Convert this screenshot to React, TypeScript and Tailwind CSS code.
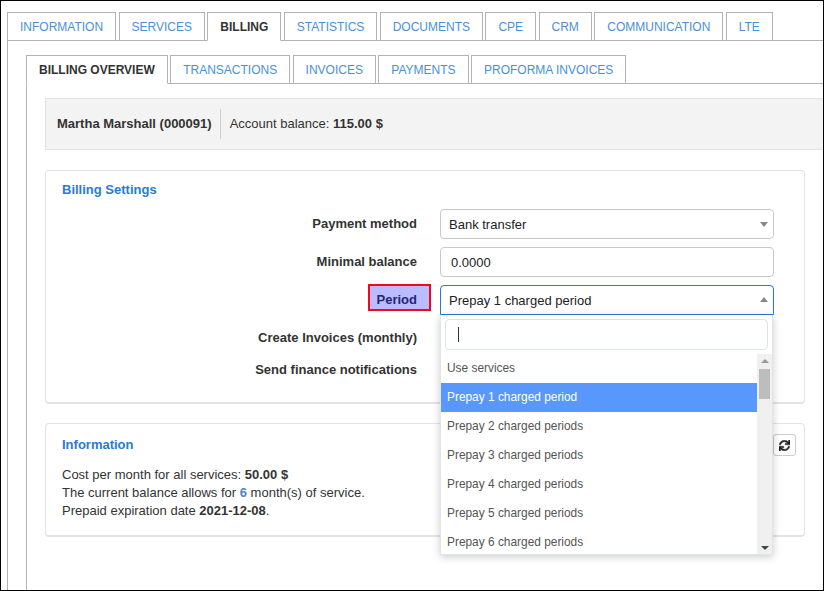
import React from 'react';
import { FaSync } from 'react-icons/fa';

const MAIN_TABS = ['INFORMATION', 'SERVICES', 'BILLING', 'STATISTICS', 'DOCUMENTS', 'CPE', 'CRM', 'COMMUNICATION', 'LTE'];
const SUB_TABS = ['BILLING OVERVIEW', 'TRANSACTIONS', 'INVOICES', 'PAYMENTS', 'PROFORMA INVOICES'];
const PERIODS = [
  'Use services',
  'Prepay 1 charged period',
  'Prepay 2 charged periods',
  'Prepay 3 charged periods',
  'Prepay 4 charged periods',
  'Prepay 5 charged periods',
  'Prepay 6 charged periods',
];

function Tabs({ items, active }: { items: string[]; active: string }) {
  return (
    <ul className="flex gap-[2.4px] border-b border-[#b3b3b3] h-[29px]">
      {items.map((tab) => (
        <li
          key={tab}
          className={`h-[29px] border border-[#b3b3b3] flex items-center text-[12px] px-[12px] ${
            tab === active ? 'border-b-white font-bold text-[#333]' : 'text-[#4a90d9]'
          }`}
        >
          {tab}
        </li>
      ))}
    </ul>
  );
}

function Label({ children }: { children: React.ReactNode }) {
  return <div className="text-right font-bold text-[#333]">{children}</div>;
}

function PeriodDropdown() {
  return (
    <div className="absolute left-0 top-[30px] z-10 w-[333px] h-[240px] bg-white shadow-[0_2px_8px_rgba(0,0,0,0.2)] border-x border-b border-[#dfe6e6] pt-[4px]">
      <div className="mx-[4px] h-[31px] border border-[#dde3e3] rounded-[4px] flex items-center pl-[12px]">
        <span className="w-px h-[15px] bg-[#333]" />
      </div>
      <div className="mt-[4px] flex h-[200px]">
        <ul className="flex-1 overflow-hidden text-[11.9px] text-[#555]">
          {PERIODS.map((p, i) => (
            <li
              key={p}
              className={`h-[29px] flex items-center pl-[6px] pb-[2px] ${i === 1 ? 'bg-[#5897fb] text-white' : ''}`}
            >
              {p}
            </li>
          ))}
        </ul>
        <div className="w-[15px] bg-[#f0f0f0] flex flex-col items-center">
          <span className="mt-[5px] w-0 h-0 border-x-[4px] border-x-transparent border-b-[4px] border-b-[#999]" />
          <span className="mt-[6px] w-[11px] h-[30px] bg-[#bdbdbd]" />
          <span className="mt-auto mb-[4px] w-0 h-0 border-x-[4px] border-x-transparent border-t-[4px] border-t-[#444]" />
        </div>
      </div>
    </div>
  );
}

export default function App() {
  return (
    <div
      className="h-[591px] overflow-hidden border border-black bg-white pt-[11px] pl-[6px] text-[13px] text-[#333] leading-[18px]"
      style={{ fontFamily: '"Liberation Sans", Arial, sans-serif' }}
    >
      <Tabs items={MAIN_TABS} active="BILLING" />

      <div className="h-[550px] border-l border-[#b3b3b3] pt-[14px] pl-[18px]">
        <Tabs items={SUB_TABS} active="BILLING OVERVIEW" />

        <div className="h-[510px] border-l border-[#b3b3b3] pt-[14px] pl-[18px]">
          {/* Customer bar */}
          <div className="h-[52px] bg-[#f3f3f3] border-y border-l border-[#e2e2e2] flex items-center pl-[11px]">
            <span className="font-bold pr-[8px]">Martha Marshall (000091)</span>
            <span className="border-l border-[#cfcfcf] h-[30px] flex items-center pl-[9px]">
              Account balance:&nbsp;<b>115.00 $</b>
            </span>
          </div>

          {/* Billing settings */}
          <section className="mt-[20px] mr-[18px] h-[234px] border border-[#e3e3e3] border-b-2 rounded-[4px] px-[16px] pt-[10px]">
            <h3 className="font-bold text-[#2a7ad8] leading-[18px]">Billing Settings</h3>
            <div className="mt-[10px] grid grid-cols-[355px_334px] gap-x-[23px] items-center">
              <div className="h-[38px] pb-[8px] flex items-center justify-end">
                <Label>Payment method</Label>
              </div>
              <div className="h-[38px] pb-[8px]">
                <div className="relative h-[30px] border border-[#c8c8c8] rounded-[4px] flex items-center pl-[8px] pt-[2px] text-[#222]">
                  Bank transfer
                  <span className="absolute right-[5px] top-[12px] w-0 h-0 border-x-[4px] border-x-transparent border-t-[5px] border-t-[#888]" />
                </div>
              </div>

              <div className="h-[38px] pb-[8px] flex items-center justify-end">
                <Label>Minimal balance</Label>
              </div>
              <div className="h-[38px] pb-[8px]">
                <div className="h-[30px] border border-[#c8c8c8] rounded-[4px] flex items-center pl-[10px] pt-[2px] text-[#222]">
                  0.0000
                </div>
              </div>

              <div className="h-[30px] flex items-start justify-end">
                <div className="-mr-[14px] -mt-[1px] h-[27px] w-[63px] bg-[#bbbbff] border-2 border-[#ee0a1e] flex items-center justify-end pr-[12px] pt-[5px] font-bold text-[#25257d]">
                  Period
                </div>
              </div>
              <div className="h-[30px] relative">
                <div className="relative h-[30px] border border-[#2a78d0] rounded-t-[4px] flex items-center pl-[8px] pt-[2px] text-[#222]">
                  Prepay 1 charged period
                  <span className="absolute right-[5px] top-[11px] w-0 h-0 border-x-[4px] border-x-transparent border-b-[5px] border-b-[#888]" />
                </div>
                <PeriodDropdown />
              </div>

              <div className="mt-[7px] h-[32px] flex items-center justify-end">
                <Label>Create Invoices (monthly)</Label>
              </div>
              <div className="mt-[7px] h-[32px]" />

              <div className="h-[32px] flex items-center justify-end">
                <Label>Send finance notifications</Label>
              </div>
              <div className="h-[32px]" />
            </div>
          </section>

          {/* Information */}
          <section className="mt-[19px] mr-[18px] h-[114px] border border-[#e3e3e3] border-b-2 rounded-[4px] px-[16px] pt-[12px]">
            <div className="flex items-start justify-between h-[18px]">
              <h3 className="font-bold text-[#2a7ad8] leading-[18px]">Information</h3>
              <button className="-mr-[8px] -mt-[2px] w-[23px] h-[22px] border border-[#ccc] rounded-[3px] flex items-center justify-center text-[#222]">
                <FaSync size={11} stroke="currentColor" strokeWidth={20} />
              </button>
            </div>
            <div className="mt-[12px]">
              <div>
                Cost per month for all services: <b>50.00 $</b>
              </div>
              <div>
                The current balance allows for <b className="text-[#4a86c8]">6</b> month(s) of service.
              </div>
              <div>
                Prepaid expiration date <b>2021-12-08</b>.
              </div>
            </div>
          </section>
        </div>
      </div>
    </div>
  );
}
